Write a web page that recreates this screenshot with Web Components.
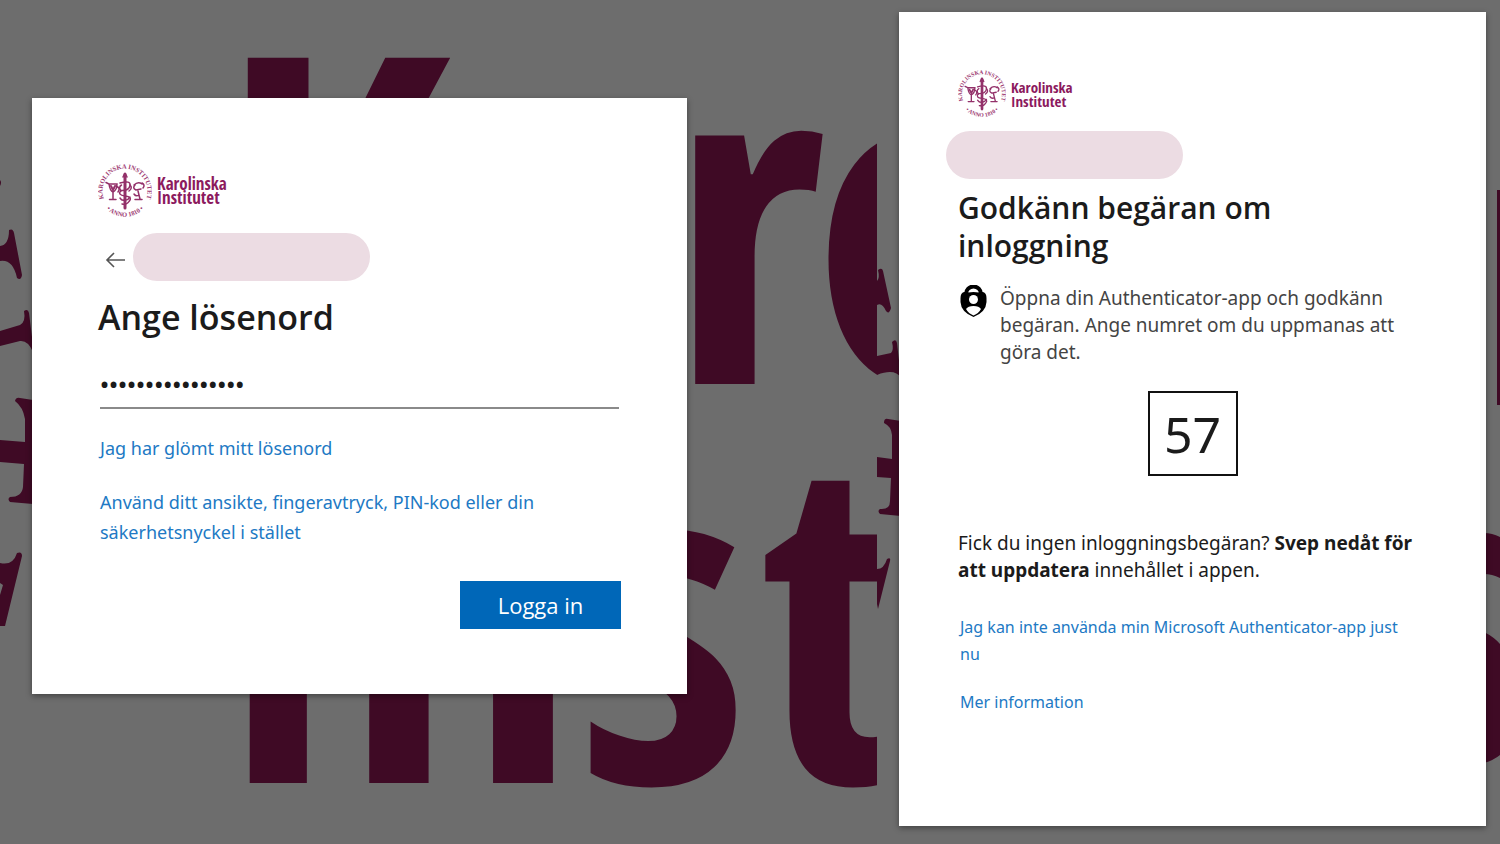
<!DOCTYPE html>
<html lang="sv">
<head>
<meta charset="utf-8">
<meta name="viewport" content="width=device-width, initial-scale=1">
<title>Karolinska Institutet - Logga in</title>
<style>
  body {
    margin: 0;
    font-family: "Noto Sans", "Open Sans", sans-serif;
    color: #1b1b1b;
  }
</style>
</head>
<body>
<ki-page></ki-page>

<script>
const define = (name, html) => {
  const template = document.createElement("template");
  template.innerHTML = html;
  customElements.define(name, class extends HTMLElement {
    constructor() {
      super();
      this.attachShadow({ mode: "open" });
      this.shadowRoot.appendChild(template.content.cloneNode(true));
    }
  });
};

// Seal and word mark, sized by --seal and --mark
define("ki-logo", `
  <style>
    :host {
      display: flex;
      align-items: center;
      gap: 5px;
      color: #8c1a5e;
    }
    svg {
      width: var(--seal, 54px);
      height: var(--seal, 54px);
      flex: none;
    }
    .mark {
      font: bold var(--mark, 17px)/14px "Open Sans Condensed", "Roboto Condensed", "Liberation Sans Narrow", sans-serif;
    }
    .ring {
      font: bold 13px "Liberation Serif", serif;
      fill: #9d3a72;
    }
  </style>
  <svg viewBox="0 0 108 108" fill="none" stroke="#93316a" stroke-width="3" stroke-linecap="round">
    <defs>
      <path id="top" d="M14 75A45 45 0 1 1 94 75"/>
      <path id="low" d="M17 90A52 52 0 0 0 91 90"/>
    </defs>
    <text class="ring" stroke="none"><textPath href="#top" startOffset="50%" text-anchor="middle">KAROLINSKA INSTITUTET</textPath></text>
    <text class="ring" stroke="none"><textPath href="#low" startOffset="50%" text-anchor="middle">• ANNO 1810 •</textPath></text>
    <path d="M54 20V88" stroke-width="6"/>
    <path d="M50 26Q54 14 58 26M44 38Q66 32 64 43T46 53Q38 62 54 64T62 75Q58 82 48 80"/>
    <path d="M46 54Q40 46 47 42M62 54Q70 48 64 42M44 68Q48 74 52 72M64 66Q60 72 56 72"/>
    <path d="M16 37L22 40Q24 54 30 56Q38 52 38 40H22M30 56V70M23 71H36M36 44Q46 48 40 56"/>
    <path d="M26 44L30 52L34 44" stroke-width="4"/>
    <path d="M72 42Q80 34 88 40M74 42Q68 48 76 52L86 50M88 38Q95 42 90 48M80 54L84 70M74 71H88M72 60Q76 66 82 62"/>
  </svg>
  <div class="mark">Karolinska<br>Institutet</div>
`);

define("ki-card", `
  <style>
    :host {
      display: flex;
      flex-direction: column;
      position: relative;
      box-sizing: border-box;
      background: #fff;
      box-shadow: 0 2px 6px rgba(0, 0, 0, .4);
    }
  </style>
  <slot></slot>
`);

// The address is masked out with a plain pill
define("ki-identity", `
  <style>
    :host {
      display: block;
      width: 237px;
      height: 48px;
      border-radius: 24px;
      background: #ecdce3;
    }
  </style>
`);

// Oversized word mark behind the password card
define("ki-backdrop-left", `
  <style>
    :host {
      display: block;
      position: absolute;
      inset: 0;
      overflow: hidden;
    }
    svg {
      display: block;
      width: 100%;
      height: 100%;
      fill: #3f0a25;
    }
    text {
      font: bold 457px "Open Sans Condensed", "Roboto Condensed", "Liberation Sans Narrow", sans-serif;
    }
  </style>
  <svg viewBox="0 0 877 844" preserveAspectRatio="xMinYMin slice" aria-hidden="true">
    <text x="219" y="384">K</text>
    <text x="670" y="384">r</text>
    <text x="812" y="384">o</text>
    <text x="210" y="783">I</text>
    <text x="344" y="783">n</text>
    <text x="577" y="783">s</text>
    <text x="758" y="783">t</text>
    <path d="M0 180Q2 182 0 186ZM0 246Q9 245 9 230Q13 228 14 233L22 275Q21 281 17 278Q13 259 0 261Z"/>
    <path d="M0 331L20 325Q26 322 24 311Q28 308 29 313L33 345V352Q28 340 20 341L0 346Z"/>
    <path d="M0 440L25 442V419Q23 407 15 401Q16 397 20 398L33 400V504L10 502Q7 499 10 497Q22 497 23 487L24 464L0 462Z"/>
    <path d="M0 563Q13 566 17 553Q22 551 22 556L5 626H0V595L3 585L0 583Z"/>
  </svg>
`);

define("ki-backdrop-right", `
  <style>
    :host {
      display: flex;
      justify-content: space-between;
      position: absolute;
      inset: 0;
      overflow: hidden;
    }
    svg {
      height: 100%;
      fill: #3f0a25;
    }
  </style>
  <svg viewBox="0 0 24 844" aria-hidden="true">
    <path d="M0 281Q3 278 1 270Q5 267 6 271L14 308Q12 315 9 311Q5 302 0 305Z"/>
    <path d="M0 356L14 353Q17 350 15 342Q19 338 20 343L24 378Q18 368 0 375Z"/>
    <path d="M0 457L15 459V435Q14 426 7 423Q7 418 11 419L24 421V516L3 514Q0 511 3 509Q13 510 13 501L14 478L0 477Z"/>
    <path d="M0 569Q7 569 10 559Q14 557 13 561L1 609L0 604Z"/>
  </svg>
  <svg viewBox="0 0 24 844" aria-hidden="true">
    <path d="M21 190H24V405H21ZM8 533Q16 533 24 537V578Q16 574 8 574ZM8 632Q18 637 24 644V755Q18 760 8 763Z"/>
  </svg>
`);

define("ki-login", `
  <style>
    :host { display: block; }
    ki-card { padding: 66px 66px 65px; }
    .who {
      display: flex;
      align-items: center;
      margin-top: 15px;
    }
    .back {
      width: 35px;
      height: 48px;
      padding: 6px 0 0 7px;
      border: 0;
      background: none;
    }
    .back svg { display: block; }
    h1 {
      margin: 12px 0 0;
      font: 600 34px/48px "Open Sans", "Noto Sans", sans-serif;
    }
    .field { padding: 0 2px; }
    input {
      box-sizing: border-box;
      width: 100%;
      height: 49px;
      margin: 19px 0 0;
      padding: 0;
      border: 0;
      border-bottom: 2px solid #8a8a8a;
      outline: 0;
      background: none;
      color: #1b1b1b;
      font: 600 24px "Open Sans", "Noto Sans", sans-serif;
    }
    a {
      display: block;
      margin: 24px 2px 0;
      color: #2179c4;
      text-decoration: none;
      font-size: 18px;
      line-height: 30px;
    }
    .login {
      align-self: flex-end;
      width: 161px;
      height: 48px;
      margin-top: 34px;
      border: 0;
      background: #0067b8;
      color: #fff;
      font: 22px "Open Sans", "Noto Sans", sans-serif;
    }
  </style>
  <ki-card>
    <ki-logo></ki-logo>
    <div class="who">
      <button class="back" type="button" aria-label="Tillbaka">
        <svg width="22" height="18" viewBox="0 0 22 18" fill="none" stroke="#555" stroke-width="1.6">
          <path d="M20 9H2M9 2L2 9L9 16"/>
        </svg>
      </button>
      <ki-identity></ki-identity>
    </div>
    <h1>Ange lösenord</h1>
    <div class="field"><input type="password" aria-label="Lösenord" value="abcdefghijklmnop"></div>
    <a href="#">Jag har glömt mitt lösenord</a>
    <a href="#">Använd ditt ansikte, fingeravtryck, PIN-kod eller din säkerhetsnyckel i stället</a>
    <button class="login" type="button">Logga in</button>
  </ki-card>
`);

define("ki-approve", `
  <style>
    :host { display: block; }
    ki-card { padding: 58px 59px 110px; }
    ki-logo {
      --seal: 48px;
      --mark: 15px;
    }
    ki-identity { margin: 13px 0 0 -12px; }
    h1 {
      margin: 10px 0 0;
      font: 600 30px/38px "Open Sans", "Noto Sans", sans-serif;
    }
    .hint {
      display: flex;
      gap: 12px;
      margin-top: 20px;
    }
    .hint svg { flex: none; }
    p {
      margin: 0;
      font-size: 19px;
      line-height: 27px;
    }
    .hint p { color: #444; }
    .number {
      align-self: center;
      box-sizing: border-box;
      width: 90px;
      height: 85px;
      margin: 25px 0 54px;
      border: 2px solid #111;
      font-size: 50px;
      line-height: 83px;
      text-align: center;
    }
    a {
      display: block;
      margin: 30px 14px 0 2px;
      color: #2179c4;
      text-decoration: none;
      font-size: 16px;
      line-height: 27px;
    }
    a + a { margin-top: 21px; }
  </style>
  <ki-card>
    <ki-logo></ki-logo>
    <ki-identity></ki-identity>
    <h1>Godkänn begäran om inloggning</h1>
    <div class="hint">
      <svg width="30" height="34" viewBox="0 0 30 34">
        <path d="M8 9A7.500 7.500 0 0 1 23 9" fill="none" stroke="#000" stroke-width="4"/>
        <path d="M6 7H25Q28.500 8 28.500 13V17Q28 27 15.500 32Q3 27 2.500 17V13Q2.500 8 6 7Z"/>
        <path d="M10 7.500Q15.500 2 21 7.500Q15.500 6.500 10 7.500Z" fill="#fff"/>
        <circle cx="15.500" cy="14.500" r="4.500" fill="#fff"/>
        <path d="M8 24Q10 21 15.500 21T23 24Q20.500 28.500 15.500 30.500Q10.500 28.500 8 24Z" fill="#fff"/>
      </svg>
      <p>Öppna din Authenticator-app och godkänn begäran. Ange numret om du uppmanas att göra det.</p>
    </div>
    <div class="number">57</div>
    <p>Fick du ingen inloggningsbegäran? <b>Svep nedåt för att uppdatera</b> innehållet i appen.</p>
    <a href="#">Jag kan inte använda min Microsoft Authenticator-app just nu</a>
    <a href="#">Mer information</a>
  </ki-card>
`);

define("ki-page", `
  <style>
    :host {
      display: grid;
      grid-template-columns: minmax(0, 877fr) minmax(0, 623fr);
      min-height: 100vh;
      background: #6d6d6d;
    }
    section {
      position: relative;
      box-sizing: border-box;
    }
    .left { padding: 98px 190px 98px 32px; }
    .right { padding: 12px 14px 18px 22px; }
  </style>
  <section class="left">
    <ki-backdrop-left></ki-backdrop-left>
    <ki-login></ki-login>
  </section>
  <section class="right">
    <ki-backdrop-right></ki-backdrop-right>
    <ki-approve></ki-approve>
  </section>
`);
</script>
</body>
</html>
